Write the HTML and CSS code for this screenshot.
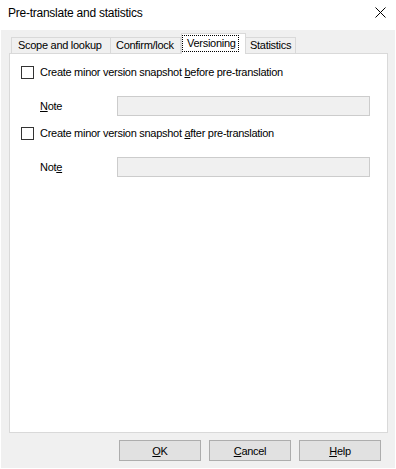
FILE: index.html
```html
<!DOCTYPE html>
<html>
<head>
<meta charset="utf-8">
<link rel="stylesheet" href="styles.css">
</head>
<body>
<div class="window">
  <div class="titlebar">
    <span class="title">Pre-translate and statistics</span>
    <svg class="close" width="11" height="11" viewBox="0 0 11 11"><path d="M0.5 0.5 L10.5 10.5 M10.5 0.5 L0.5 10.5" stroke="#000" stroke-width="1" fill="none"/></svg>
  </div>
  <div class="client">
    <div class="tabs">
      <div class="tab t1">Scope and lookup</div>
      <div class="tab t2">Confirm/lock</div>
      <div class="tab t3 selected"><span class="focus">Versioning</span></div>
      <div class="tab t4">Statistics</div>
    </div>
    <div class="panel">
      <div class="check-row first">
        <span class="checkbox"></span>
        <span class="label">Create minor version snapshot <u>b</u>efore pre-translation</span>
      </div>
      <div class="note-row">
        <span class="note-label"><u>N</u>ote</span>
        <span class="input"></span>
      </div>
      <div class="check-row second">
        <span class="checkbox"></span>
        <span class="label">Create minor version snapshot <u>a</u>fter pre-translation</span>
      </div>
      <div class="note-row">
        <span class="note-label">Not<u>e</u></span>
        <span class="input"></span>
      </div>
    </div>
    <div class="buttons">
      <div class="btn"><u>O</u>K</div>
      <div class="btn"><u>C</u>ancel</div>
      <div class="btn"><u>H</u>elp</div>
    </div>
  </div>
</div>
</body>
</html>
```

FILE: styles.css
```css
html, body {
  margin: 0;
  padding: 0;
  background: #ffffff;
}
body {
  font-family: "Liberation Sans", Arial, sans-serif;
  font-size: 11px;
  letter-spacing: -0.28px;
  color: #000;
}
.window {
  width: 396px;
  height: 469px;
  display: flex;
  flex-direction: column;
  background: #ffffff;
}
.titlebar {
  height: 30px;
  flex: none;
  display: flex;
  align-items: center;
  justify-content: space-between;
  padding: 0 10px 0 8px;
  box-sizing: border-box;
}
.title {
  font-size: 12px;
  letter-spacing: -0.25px;
  margin-top: -4px;
}
.close {
  margin-top: -5px;
}
.client {
  flex: 1;
  margin: 0 1px 1px 1px;
  background: #f0f0f0;
  padding: 3px 0 0 8px;
  box-sizing: border-box;
  display: flex;
  flex-direction: column;
}
.tabs {
  display: flex;
  align-items: flex-end;
  padding-left: 2px;
  height: 20px;
  position: relative;
  z-index: 1;
}
.tab {
  box-sizing: border-box;
  height: 16px;
  border: 1px solid #d9d9d9;
  border-bottom: none;
  background: #f0f0f0;
  line-height: 14px;
  padding-left: 6px;
  white-space: nowrap;
}
.t1 { width: 100px; margin-right: -1px; }
.t2 { width: 71px; padding-left: 5px; }
.t4 { width: 51px; padding-left: 4px; }
.tab.selected {
  height: 21px;
  margin: 0 -1px -1px 0;
  width: 65px;
  background: #ffffff;
  padding: 2px 0 0 1px;
  line-height: 14px;
}
.focus {
  display: inline-block;
  outline: 1px dotted #000;
  outline-offset: 0;
  padding: 0 2px 0 4px;
  line-height: 15px;
}
.panel {
  width: 379px;
  height: 380px;
  box-sizing: border-box;
  border: 1px solid #d9d9d9;
  background: #ffffff;
  display: flex;
  flex-direction: column;
  padding: 12px 0 0 11px;
}
.check-row {
  display: flex;
  align-items: center;
  height: 13px;
}
.check-row.second {
  margin-top: 11px;
}
.checkbox {
  width: 13px;
  height: 13px;
  box-sizing: border-box;
  border: 1px solid #333333;
  background: #fff;
  flex: none;
}
.label {
  margin-left: 6px;
  line-height: 13px;
}
.note-row {
  display: flex;
  align-items: center;
  margin-top: 17px;
  padding-left: 19px;
}
.note-label {
  width: 77px;
}
.input {
  width: 253px;
  height: 20px;
  box-sizing: border-box;
  border: 1px solid #cccccc;
  background: #f0f0f0;
}
u {
  text-decoration: underline;
  text-underline-offset: 1px;
}
.buttons {
  display: flex;
  gap: 8px;
  margin-top: 7px;
  padding-left: 110px;
}
.btn {
  width: 82px;
  height: 21px;
  box-sizing: border-box;
  border: 1px solid #adadad;
  background: #e1e1e1;
  display: flex;
  align-items: center;
  justify-content: center;
}
```
